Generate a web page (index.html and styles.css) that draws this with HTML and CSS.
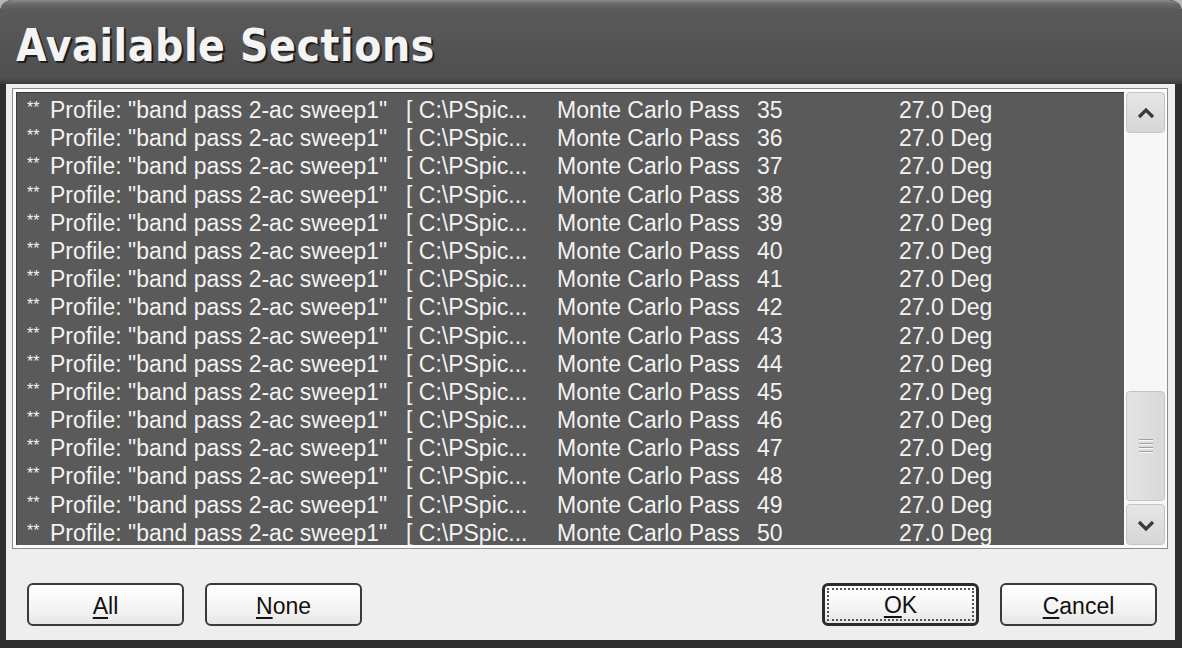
FILE: index.html
```html
<!DOCTYPE html>
<html>
<head>
<meta charset="utf-8">
<link rel="stylesheet" href="styles.css">
</head>
<body>
<div class="window">
  <div class="titlebar"><span class="title">Available Sections</span></div>
  <div class="client">
    <div class="listbox">
      <div class="list">
        <div class="row"><span class="c1"><span class="stars">**</span>Profile: "band pass 2-ac sweep1"</span><span class="c2">[ C:\PSpic...</span><span class="c3">Monte Carlo Pass</span><span class="c4">35</span><span class="c5">27.0 Deg</span></div>
        <div class="row"><span class="c1"><span class="stars">**</span>Profile: "band pass 2-ac sweep1"</span><span class="c2">[ C:\PSpic...</span><span class="c3">Monte Carlo Pass</span><span class="c4">36</span><span class="c5">27.0 Deg</span></div>
        <div class="row"><span class="c1"><span class="stars">**</span>Profile: "band pass 2-ac sweep1"</span><span class="c2">[ C:\PSpic...</span><span class="c3">Monte Carlo Pass</span><span class="c4">37</span><span class="c5">27.0 Deg</span></div>
        <div class="row"><span class="c1"><span class="stars">**</span>Profile: "band pass 2-ac sweep1"</span><span class="c2">[ C:\PSpic...</span><span class="c3">Monte Carlo Pass</span><span class="c4">38</span><span class="c5">27.0 Deg</span></div>
        <div class="row"><span class="c1"><span class="stars">**</span>Profile: "band pass 2-ac sweep1"</span><span class="c2">[ C:\PSpic...</span><span class="c3">Monte Carlo Pass</span><span class="c4">39</span><span class="c5">27.0 Deg</span></div>
        <div class="row"><span class="c1"><span class="stars">**</span>Profile: "band pass 2-ac sweep1"</span><span class="c2">[ C:\PSpic...</span><span class="c3">Monte Carlo Pass</span><span class="c4">40</span><span class="c5">27.0 Deg</span></div>
        <div class="row"><span class="c1"><span class="stars">**</span>Profile: "band pass 2-ac sweep1"</span><span class="c2">[ C:\PSpic...</span><span class="c3">Monte Carlo Pass</span><span class="c4">41</span><span class="c5">27.0 Deg</span></div>
        <div class="row"><span class="c1"><span class="stars">**</span>Profile: "band pass 2-ac sweep1"</span><span class="c2">[ C:\PSpic...</span><span class="c3">Monte Carlo Pass</span><span class="c4">42</span><span class="c5">27.0 Deg</span></div>
        <div class="row"><span class="c1"><span class="stars">**</span>Profile: "band pass 2-ac sweep1"</span><span class="c2">[ C:\PSpic...</span><span class="c3">Monte Carlo Pass</span><span class="c4">43</span><span class="c5">27.0 Deg</span></div>
        <div class="row"><span class="c1"><span class="stars">**</span>Profile: "band pass 2-ac sweep1"</span><span class="c2">[ C:\PSpic...</span><span class="c3">Monte Carlo Pass</span><span class="c4">44</span><span class="c5">27.0 Deg</span></div>
        <div class="row"><span class="c1"><span class="stars">**</span>Profile: "band pass 2-ac sweep1"</span><span class="c2">[ C:\PSpic...</span><span class="c3">Monte Carlo Pass</span><span class="c4">45</span><span class="c5">27.0 Deg</span></div>
        <div class="row"><span class="c1"><span class="stars">**</span>Profile: "band pass 2-ac sweep1"</span><span class="c2">[ C:\PSpic...</span><span class="c3">Monte Carlo Pass</span><span class="c4">46</span><span class="c5">27.0 Deg</span></div>
        <div class="row"><span class="c1"><span class="stars">**</span>Profile: "band pass 2-ac sweep1"</span><span class="c2">[ C:\PSpic...</span><span class="c3">Monte Carlo Pass</span><span class="c4">47</span><span class="c5">27.0 Deg</span></div>
        <div class="row"><span class="c1"><span class="stars">**</span>Profile: "band pass 2-ac sweep1"</span><span class="c2">[ C:\PSpic...</span><span class="c3">Monte Carlo Pass</span><span class="c4">48</span><span class="c5">27.0 Deg</span></div>
        <div class="row"><span class="c1"><span class="stars">**</span>Profile: "band pass 2-ac sweep1"</span><span class="c2">[ C:\PSpic...</span><span class="c3">Monte Carlo Pass</span><span class="c4">49</span><span class="c5">27.0 Deg</span></div>
        <div class="row"><span class="c1"><span class="stars">**</span>Profile: "band pass 2-ac sweep1"</span><span class="c2">[ C:\PSpic...</span><span class="c3">Monte Carlo Pass</span><span class="c4">50</span><span class="c5">27.0 Deg</span></div>
      </div>
      <div class="scrollbar">
        <div class="sbtn">
          <svg width="20" height="14" viewBox="0 0 20 14"><path d="M3 11 L10 4 L17 11" fill="none" stroke="#3a3a3a" stroke-width="3.2"/></svg>
        </div>
        <div class="track">
          <div class="thumb"><span class="grip"></span><span class="grip"></span><span class="grip"></span><span class="grip"></span></div>
        </div>
        <div class="sbtn">
          <svg width="20" height="14" viewBox="0 0 20 14"><path d="M3 4 L10 11 L17 4" fill="none" stroke="#3a3a3a" stroke-width="3.2"/></svg>
        </div>
      </div>
    </div>
    <div class="buttons">
      <div class="group">
        <div class="btn"><span class="u">A</span>ll</div>
        <div class="btn"><span class="u">N</span>one</div>
      </div>
      <div class="group">
        <div class="btn default"><span class="focus"><span class="u">O</span>K</span></div>
        <div class="btn"><span class="u">C</span>ancel</div>
      </div>
    </div>
  </div>
</div>
</body>
</html>
```
FILE: styles.css
```css
html, body {
  margin: 0;
  padding: 0;
}
body {
  width: 1182px;
  height: 648px;
  background: #b8b8b8;
  overflow: hidden;
}
.window {
  width: 1182px;
  height: 648px;
  background: #2e2e2e;
  border-radius: 12px 12px 0 0;
  display: flex;
  flex-direction: column;
  overflow: hidden;
}
.titlebar {
  height: 84px;
  flex: none;
  box-sizing: border-box;
  padding: 19px 0 0 16px;
  background: linear-gradient(to bottom, #8a8a8a 0px, #6a6a6a 4px, #5a5a5a 10px, #555555 40px, #4f4f4f 78px, #3a3a3a 84px);
  border-radius: 12px 12px 0 0;
}
.title {
  font-family: "DejaVu Sans Condensed", "DejaVu Sans", sans-serif;
  font-weight: bold;
  font-size: 44px;
  line-height: 54px;
  color: #f4f4f4;
  letter-spacing: 0.6px;
  text-shadow: 2px 2px 0 #1e1e1e, 1px 1px 0 #1e1e1e;
}
.client {
  flex: 1;
  margin: 0 7px 8px 6px;
  background: #eeeeee;
  display: flex;
  flex-direction: column;
}
.listbox {
  margin: 4px 0 0 6px;
  width: 1156px;
  height: 461px;
  box-sizing: border-box;
  border: 1px solid #8c8c8c;
  background: #fbfbfb;
  padding: 3px 2px 3px 3px;
  display: flex;
}
.list {
  width: 1108px;
  background: #5a5a5a;
  border-top: 1px solid #3c3c3c;
  border-left: 1px solid #3c3c3c;
  box-sizing: border-box;
  padding: 3px 0 0 10px;
  overflow: hidden;
  font-family: "Liberation Sans", Arial, sans-serif;
  font-size: 23px;
  color: #f2f2f2;
}
.row {
  height: 28.2px;
  line-height: 28px;
  display: flex;
  white-space: nowrap;
  flex: none;
}
.c1 { width: 379px; }
.c2 { width: 151px; }
.c3 { width: 200px; }
.c4 { width: 142px; }
.c5 { flex: 1; }
.stars {
  display: inline-block;
  width: 23px;
  font-size: 16px;
  vertical-align: 5px;
  line-height: 14px;
  letter-spacing: 0;
}
.scrollbar {
  flex: 1;
  margin-left: 2px;
  display: flex;
  flex-direction: column;
  background: #f6f6f6;
}
.sbtn {
  height: 41px;
  flex: none;
  box-sizing: border-box;
  border: 1px solid #c4c4c4;
  border-radius: 4px;
  background: linear-gradient(to bottom, #e6e6e6, #d6d6d6);
  display: flex;
  align-items: center;
  justify-content: center;
}
.track {
  flex: 1;
  display: flex;
  flex-direction: column;
  justify-content: flex-end;
  padding-bottom: 3px;
}
.thumb {
  height: 110px;
  box-sizing: border-box;
  border: 1px solid #c4c4c4;
  border-radius: 4px;
  background: linear-gradient(to right, #e4e4e4, #d8d8d8);
  display: flex;
  flex-direction: column;
  align-items: center;
  justify-content: center;
  gap: 2px;
}
.grip {
  width: 14px;
  height: 1px;
  background: #a0a0a0;
  border-bottom: 1px solid #f8f8f8;
}
.buttons {
  margin: 34px 18px 0 21px;
  display: flex;
  justify-content: space-between;
}
.group {
  display: flex;
  gap: 21px;
}
.btn {
  width: 157px;
  height: 43px;
  box-sizing: border-box;
  border: 2px solid #3a3a3a;
  border-radius: 6px;
  background: linear-gradient(to bottom, #ffffff, #f4f4f4 60%, #e6e6e6);
  font-family: "Liberation Sans", Arial, sans-serif;
  font-size: 23px;
  color: #111;
  display: flex;
  align-items: center;
  justify-content: center;
  padding-top: 3px;
}
.btn.default {
  border: 3px solid #2c2c2c;
  padding: 2px;
}
.focus {
  flex: 1;
  align-self: stretch;
  border: 2px dotted #555;
  display: flex;
  align-items: center;
  justify-content: center;
  padding-top: 2px;
}
.u {
  text-decoration: underline;
  text-underline-offset: 3px;
  text-decoration-thickness: 2px;
}
```
